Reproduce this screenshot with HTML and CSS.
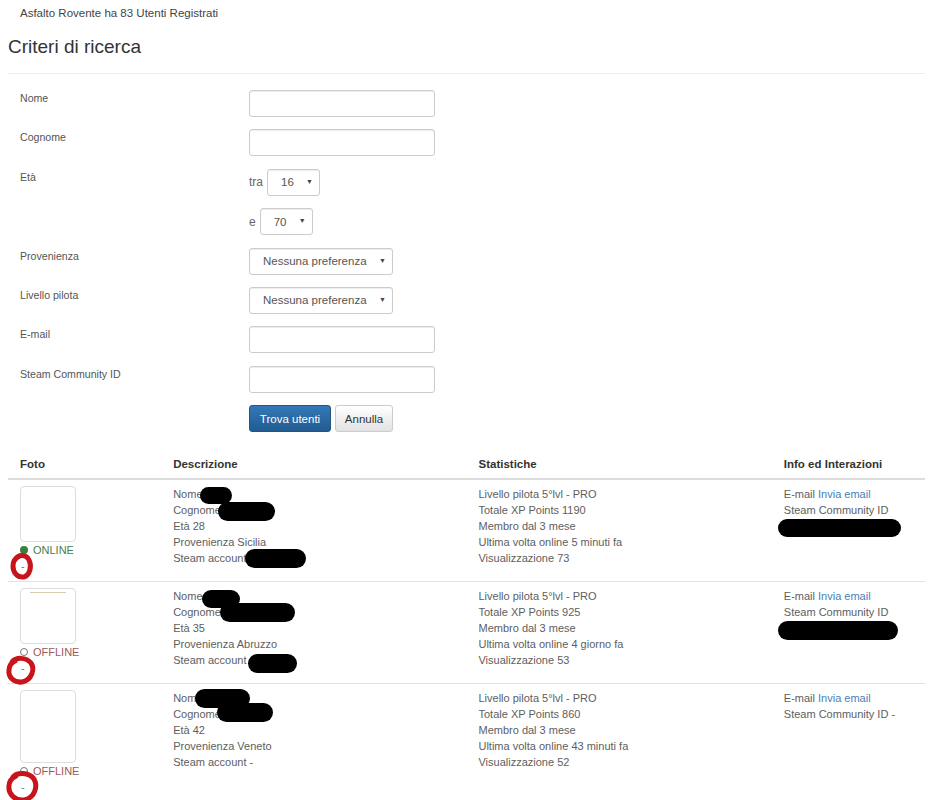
FILE: index.html
```html
<!DOCTYPE html>
<html>
<head>
	<meta charset="utf-8">
	<title>Utenti registrati</title>
	<link rel="stylesheet" href="styles.css">
</head>
<body>
	<div class="page">
		<p class="count">Asfalto Rovente ha 83 Utenti Registrati</p>
		<h3 class="title">Criteri di ricerca</h3>
		<hr>
		<form class="search">
			<div class="row">
				<label>Nome</label>
				<div class="field"><input type="text"></div>
			</div>
			<div class="row">
				<label>Cognome</label>
				<div class="field"><input type="text"></div>
			</div>
			<div class="row">
				<label>Età</label>
				<div class="field">
					<div class="range"><span>tra</span><span class="select small"><select><option>16</option></select></span></div>
					<div class="range"><span>e</span><span class="select small"><select><option>70</option></select></span></div>
				</div>
			</div>
			<div class="row">
				<label>Provenienza</label>
				<div class="field"><span class="select"><select><option>Nessuna preferenza</option></select></span></div>
			</div>
			<div class="row">
				<label>Livello pilota</label>
				<div class="field"><span class="select"><select><option>Nessuna preferenza</option></select></span></div>
			</div>
			<div class="row">
				<label>E-mail</label>
				<div class="field"><input type="text"></div>
			</div>
			<div class="row">
				<label>Steam Community ID</label>
				<div class="field"><input type="text"></div>
			</div>
			<div class="row">
				<label></label>
				<div class="field buttons">
					<button type="button" class="btn btn-primary">Trova utenti</button>
					<button type="reset" class="btn">Annulla</button>
				</div>
			</div>
		</form>

		<table class="users">
			<thead>
				<tr>
					<th class="c1">Foto</th>
					<th class="c2">Descrizione</th>
					<th class="c2">Statistiche</th>
					<th class="c1">Info ed Interazioni</th>
				</tr>
			</thead>
			<tbody>
				<tr>
					<td>
						<div class="photo"></div>
						<div class="status online"><i></i>ONLINE</div>
						<div class="dash">-
							<svg class="mark" width="30" height="30" viewBox="0 0 30 30" style="left:-11px;top:-7px"><path d="M6 9C9 3 17 3 20 9C23 15 21 24 15 26C8 27 4 21 4 15C4 11 5 8 9 6"/></svg>
						</div>
					</td>
					<td class="lines">
						<div>Nome <span class="redact" style="left:27px;top:1px;width:32px;height:17px"></span></div>
						<div>Cognome <span class="redact" style="left:45px;top:0;width:57px;height:19px"></span></div>
						<div>Età 28</div>
						<div>Provenienza Sicilia</div>
						<div>Steam account <span class="redact" style="left:72px;top:-1px;width:61px;height:19px"></span></div>
					</td>
					<td class="lines">
						<div>Livello pilota 5°lvl - PRO</div>
						<div>Totale XP Points 1190</div>
						<div>Membro dal 3 mese</div>
						<div>Ultima volta online 5 minuti fa</div>
						<div>Visualizzazione 73</div>
					</td>
					<td class="lines">
						<div>E-mail <a href="#">Invia email</a></div>
						<div>Steam Community ID</div>
						<div><span class="redact" style="left:-6px;top:1px;width:123px;height:18px"></span></div>
					</td>
				</tr>
				<tr>
					<td>
						<div class="photo"><div class="thumb"></div></div>
						<div class="status offline"><i></i>OFFLINE</div>
						<div class="dash">-
							<svg class="mark" width="34" height="34" viewBox="0 0 34 34" style="left:-16px;top:-7px"><path d="M8 9C12 4 22 4 27 10C31 16 28 27 18 29C10 30 4 24 5 17C5 13 7 10 11 8"/></svg>
						</div>
					</td>
					<td class="lines">
						<div>Nome <span class="redact" style="left:29px;top:2px;width:38px;height:18px"></span></div>
						<div>Cognome <span class="redact" style="left:47px;top:-1px;width:75px;height:19px"></span></div>
						<div>Età 35</div>
						<div>Provenienza Abruzzo</div>
						<div>Steam account <span class="redact" style="left:75px;top:2px;width:49px;height:19px"></span></div>
					</td>
					<td class="lines">
						<div>Livello pilota 5°lvl - PRO</div>
						<div>Totale XP Points 925</div>
						<div>Membro dal 3 mese</div>
						<div>Ultima volta online 4 giorno fa</div>
						<div>Visualizzazione 53</div>
					</td>
					<td class="lines">
						<div>E-mail <a href="#">Invia email</a></div>
						<div>Steam Community ID</div>
						<div><span class="redact" style="left:-6px;top:1px;width:120px;height:19px"></span></div>
					</td>
				</tr>
				<tr>
					<td>
						<div class="photo tall"></div>
						<div class="status offline"><i></i>OFFLINE</div>
						<div class="dash">-
							<svg class="mark" width="38" height="38" viewBox="0 0 38 38" style="left:-16px;top:-12px"><path d="M9 10C13 5 25 5 30 12C34 19 31 31 20 33C11 34 4 27 5 19C5 15 8 11 12 9"/></svg>
						</div>
					</td>
					<td class="lines">
						<div>Nome <span class="redact" style="left:22px;top:-1px;width:55px;height:19px"></span></div>
						<div>Cognome <span class="redact" style="left:44px;top:-3px;width:56px;height:19px"></span></div>
						<div>Età 42</div>
						<div>Provenienza Veneto</div>
						<div>Steam account -</div>
					</td>
					<td class="lines">
						<div>Livello pilota 5°lvl - PRO</div>
						<div>Totale XP Points 860</div>
						<div>Membro dal 3 mese</div>
						<div>Ultima volta online 43 minuti fa</div>
						<div>Visualizzazione 52</div>
					</td>
					<td class="lines">
						<div>E-mail <a href="#">Invia email</a></div>
						<div>Steam Community ID -</div>
					</td>
				</tr>
			</tbody>
		</table>
	</div>
</body>
</html>
```

FILE: styles.css
```css
*{
	margin: 0;
	padding: 0;
	box-sizing: border-box;
}
body{
	background: #fff;
	font-family: "Liberation Sans", Arial, sans-serif;
	font-size: 11px;
	color: #5e5e5e;
}
.page{
	width: 917px;
	margin-left: 8px;
}
.count{
	padding: 6px 12px 0;
	line-height: 15px;
	font-size: 11.5px;
	color: #444;
}
.title{
	margin-top: 15px;
	font-size: 19px;
	font-weight: normal;
	line-height: 22px;
	color: #333;
}
hr{
	margin-top: 15px;
	border: 0;
	border-top: 1px solid #eee;
}

/* form */
.search{
	margin-top: 16px;
}
.row{
	display: flex;
}
.row label{
	width: 241px;
	padding: 1px 12px 0;
	line-height: 15px;
	font-size: 10.6px;
	color: #555;
}
.field{
	flex: 1;
}
.field input,
.field .select,
.range{
	margin-bottom: 12.4px;
}
.field input{
	display: block;
	width: 186px;
	height: 27px;
	border: 1px solid #ccc;
	border-radius: 3px;
	box-shadow: inset 0 1px 1px rgba(0,0,0,.075);
}
.range{
	display: flex;
	align-items: center;
}
.range span:first-child{
	margin-right: 4px;
	font-size: 12px;
	color: #666;
}
.range .select{
	margin-bottom: 0;
}
.select{
	position: relative;
	display: block;
	width: 144px;
	height: 27px;
}
.select.small{
	width: 53px;
}
.select select{
	width: 100%;
	height: 100%;
	padding-left: 13px;
	border: 1px solid #ccc;
	border-radius: 3px;
	background: #fff;
	font-family: inherit;
	font-size: 11.5px;
	color: #555;
	appearance: none;
	-webkit-appearance: none;
	box-shadow: inset 0 1px 1px rgba(0,0,0,.075);
}
.select:after{
	content: "\25BC";
	position: absolute;
	right: 7px;
	top: 9px;
	font-size: 7px;
	color: #444;
	pointer-events: none;
}
.buttons{
	display: flex;
	gap: 4px;
}
.btn{
	height: 27px;
	border: 1px solid #ccc;
	border-radius: 3px;
	background: linear-gradient(#fff, #e2e2e2);
	font-family: inherit;
	font-size: 11.5px;
	color: #333;
	width: 58px;
}
.btn-primary{
	width: 82px;
	border-color: #245580;
	background: linear-gradient(#3478b8, #225b90);
	color: #fff;
}

/* table */
.users{
	width: 917px;
	margin-top: 19px;
	border-collapse: collapse;
}
.users th{
	padding: 6px 12px;
	line-height: 15px;
	font-size: 11.5px;
	text-align: left;
	color: #333;
	border-bottom: 2px solid #ddd;
}
.users th.c1{
	width: 153px;
}
.users th.c2{
	width: 305px;
}
.users td{
	padding: 6px 12px 7px;
	line-height: 16px;
	vertical-align: top;
	border-bottom: 1px solid #e2e2e2;
}
.users tr:last-child td{
	border-bottom: none;
}
.lines div{
	position: relative;
	height: 16px;
	white-space: nowrap;
}
.lines a{
	color: #4a80b8;
	text-decoration: none;
}
.redact{
	position: absolute;
	background: #000;
	border-radius: 10px;
}
.photo{
	width: 56px;
	height: 56px;
	border: 1px solid #ddd;
	border-radius: 4px;
}
.photo.tall{
	height: 73px;
}
.thumb{
	margin: 3px 0 0 9px;
	width: 36px;
	border-top: 1px solid #d8cdb0;
}
.status{
	display: flex;
	align-items: center;
	height: 16px;
}
.status i{
	width: 8px;
	height: 8px;
	margin-right: 5px;
	border-radius: 50%;
}
.online{
	color: #4b7d4b;
}
.online i{
	background: #3a7f3a;
}
.offline{
	color: #9c5a5a;
}
.offline i{
	border: 1px solid #777;
}
.dash{
	position: relative;
	height: 16px;
	padding-left: 1px;
	color: #777;
}
.mark{
	position: absolute;
	fill: none;
	stroke: #c8141b;
	stroke-width: 5;
	stroke-linecap: round;
}
```
